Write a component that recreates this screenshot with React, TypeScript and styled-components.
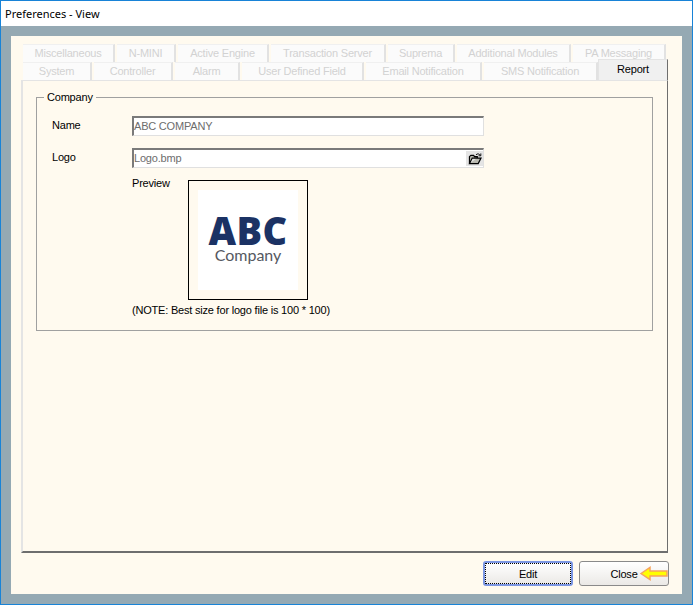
import React from 'react';
import styled, { createGlobalStyle } from 'styled-components';

const GlobalStyle = createGlobalStyle`
	html, body {
		margin: 0;
		padding: 0;
		background: #fff;
	}
	* {
		box-sizing: border-box;
	}
`;

const Window = styled.div`
	width: 693px;
	height: 605px;
	display: flex;
	flex-direction: column;
	background: #95a9b3;
	border: 1px solid #1883d7;
	font-family: 'Liberation Sans', Arial, sans-serif;
	font-size: 11px;
	letter-spacing: -0.2px;
	color: #000;
`;

const TitleBar = styled.div`
	height: 25px;
	flex: none;
	background: #fff;
	padding: 5px 0 0 4px;
	font-family: 'Noto Sans', sans-serif;
	font-size: 11px;
	letter-spacing: 0;
	line-height: 16px;
`;

const Dialog = styled.div`
	flex: 1;
	margin: 10px;
	padding: 8px 14px 8px 10px;
	background: #fffaef;
	display: flex;
	flex-direction: column;
`;

const TabRow = styled.div`
	display: flex;
	height: 18px;
	padding-left: 2px;
	gap: 2px;
`;

const Tab = styled.div<{ $width: number }>`
	width: ${ ( props ) => props.$width }px;
	height: 18px;
	flex: none;
	background: #fbfbfb;
	border-right: 2px solid #e2e2e2;
	border-top: 1px solid #f0f0f0;
	color: #d2d2d2;
	text-align: center;
	line-height: 17px;
	white-space: nowrap;
`;

const ActiveTab = styled.div`
	width: 70px;
	height: 21px;
	margin: -3px 0 0 -2px;
	flex: none;
	background: #f0f0f0;
	border-top: 1px solid #e4e4e4;
	border-left: 1px solid #e4e4e4;
	border-right: 1px solid #6e6e6e;
	text-align: center;
	line-height: 19px;
	position: relative;
	z-index: 1;
`;

const Panel = styled.div`
	flex: 1;
	width: 647px;
	border-top: 1px solid #e4e4e4;
	border-left: 2px solid #e4e4e4;
	border-right: 1px solid #6e6e6e;
	border-bottom: 2px solid #6e6e6e;
	padding: 10px 14px 0 13px;
`;

const GroupBox = styled.fieldset`
	margin: 0;
	padding: 13px 0 0 15px;
	height: 240px;
	border: 1px solid #a0a0a0;
	min-inline-size: 0;
`;

const GroupTitle = styled.legend`
	margin-left: -8px;
	padding: 0 3px;
	line-height: 12px;
`;

const FieldRow = styled.div`
	display: flex;
	align-items: flex-start;
	height: 32px;
`;

const FieldLabel = styled.div`
	width: 80px;
	flex: none;
	margin-top: 1px;
	line-height: 16px;
`;

const TextBox = styled.div`
	position: relative;
	width: 352px;
	height: 20px;
	background: #fff;
	border-top: 2px solid #7a7a7a;
	border-left: 2px solid #7a7a7a;
	border-right: 1px solid #e0e0e0;
	border-bottom: 1px solid #e0e0e0;
	color: #6d6d6d;
	line-height: 17px;
`;

const BrowseButton = styled.div`
	position: absolute;
	top: 1px;
	right: 0;
	width: 17px;
	height: 15px;
	background: #e4e4e4;
	display: flex;
	align-items: center;
	justify-content: center;
`;

const PreviewRow = styled.div`
	display: flex;
	align-items: flex-start;
	padding-left: 80px;
`;

const PreviewLabel = styled.div`
	width: 56px;
	flex: none;
	margin-top: -5px;
	line-height: 16px;
`;

const PreviewBox = styled.div`
	width: 120px;
	height: 120px;
	border: 1px solid #000;
	padding: 9px;
`;

const LogoImage = styled.div`
	width: 100px;
	height: 100px;
	background: #fff;
	display: flex;
	flex-direction: column;
	align-items: center;
	padding-top: 25px;
`;

const LogoMark = styled.div`
	font-family: 'Open Sans', sans-serif;
	font-weight: 800;
	font-size: 38px;
	line-height: 30px;
	letter-spacing: 0.3px;
	color: #1b3264;
`;

const LogoName = styled.div`
	font-family: 'Lato', sans-serif;
	font-size: 16px;
	line-height: 18px;
	letter-spacing: 0;
	color: #55585f;
	margin-top: 1px;
`;

const Note = styled.div`
	padding-left: 80px;
	margin-top: 2px;
	line-height: 16px;
`;

const Footer = styled.div`
	height: 33px;
	flex: none;
	display: flex;
	justify-content: flex-end;
	align-items: flex-end;
	gap: 6px;
	margin-right: -1px;
`;

const Button = styled.div<{ $focused?: boolean }>`
	position: relative;
	width: 90px;
	height: 25px;
	display: flex;
	align-items: center;
	justify-content: center;
	border: ${ ( props ) =>
		props.$focused ? '2px solid #7c97e4' : '1px solid #8a8a8a' };
	border-radius: 3px;
	background: linear-gradient( #fff, #ebe9e6 );
	${ ( props ) =>
		props.$focused &&
		'outline: 1px dotted #000; outline-offset: -3px;' }
`;

const Pointer = styled.svg`
	position: absolute;
	right: -1px;
	top: 4px;
`;

const FolderIcon = () => (
	<svg width="14" height="12" viewBox="0 0 15 13">
		<path
			d="M1.5 11.5V4L3 2.5H6L7 4H10V5.5M1.5 11.5H11L14 5.5H4.5L1.5 11.5Z"
			fill="#b9b9b0"
			stroke="#000"
			strokeWidth="1.3"
		/>
		<path d="M8.5 2C10 0.5 12 0.5 13 2.5M13.8 0.5V3H11.3" fill="none" stroke="#000" />
	</svg>
);

const TOP_TABS = [
	{ label: 'Miscellaneous', width: 92 },
	{ label: 'N-MINI', width: 59 },
	{ label: 'Active Engine', width: 91 },
	{ label: 'Transaction Server', width: 115 },
	{ label: 'Suprema', width: 67 },
	{ label: 'Additional Modules', width: 114 },
	{ label: 'PA Messaging', width: 93 },
];

const BOTTOM_TABS = [
	{ label: 'System', width: 69 },
	{ label: 'Controller', width: 79 },
	{ label: 'Alarm', width: 65 },
	{ label: 'User Defined Field', width: 122 },
	{ label: 'Email Notification', width: 116 },
	{ label: 'SMS Notification', width: 114 },
];

const App = () => (
	<>
		<GlobalStyle />
		<Window>
			<TitleBar>Preferences - View</TitleBar>
			<Dialog>
				<TabRow>
					{ TOP_TABS.map( ( tab ) => (
						<Tab key={ tab.label } $width={ tab.width }>
							{ tab.label }
						</Tab>
					) ) }
				</TabRow>
				<TabRow>
					{ BOTTOM_TABS.map( ( tab ) => (
						<Tab key={ tab.label } $width={ tab.width }>
							{ tab.label }
						</Tab>
					) ) }
					<ActiveTab>Report</ActiveTab>
				</TabRow>
				<Panel>
					<GroupBox>
						<GroupTitle>Company</GroupTitle>
						<FieldRow>
							<FieldLabel>Name</FieldLabel>
							<TextBox>ABC COMPANY</TextBox>
						</FieldRow>
						<FieldRow>
							<FieldLabel>Logo</FieldLabel>
							<TextBox>
								Logo.bmp
								<BrowseButton>
									<FolderIcon />
								</BrowseButton>
							</TextBox>
						</FieldRow>
						<PreviewRow>
							<PreviewLabel>Preview</PreviewLabel>
							<PreviewBox>
								<LogoImage>
									<LogoMark>ABC</LogoMark>
									<LogoName>Company</LogoName>
								</LogoImage>
							</PreviewBox>
						</PreviewRow>
						<Note>(NOTE: Best size for logo file is 100 * 100)</Note>
					</GroupBox>
				</Panel>
				<Footer>
					<Button $focused>Edit</Button>
					<Button>
						Close
						<Pointer width="30" height="15" viewBox="0 0 30 15">
							<path
								d="M2 7.5L11 1.5V5H28V10H11V13.5Z"
								fill="#ffff00"
								stroke="#f7a35c"
								strokeWidth="1.5"
							/>
						</Pointer>
					</Button>
				</Footer>
			</Dialog>
		</Window>
	</>
);

export default App;
